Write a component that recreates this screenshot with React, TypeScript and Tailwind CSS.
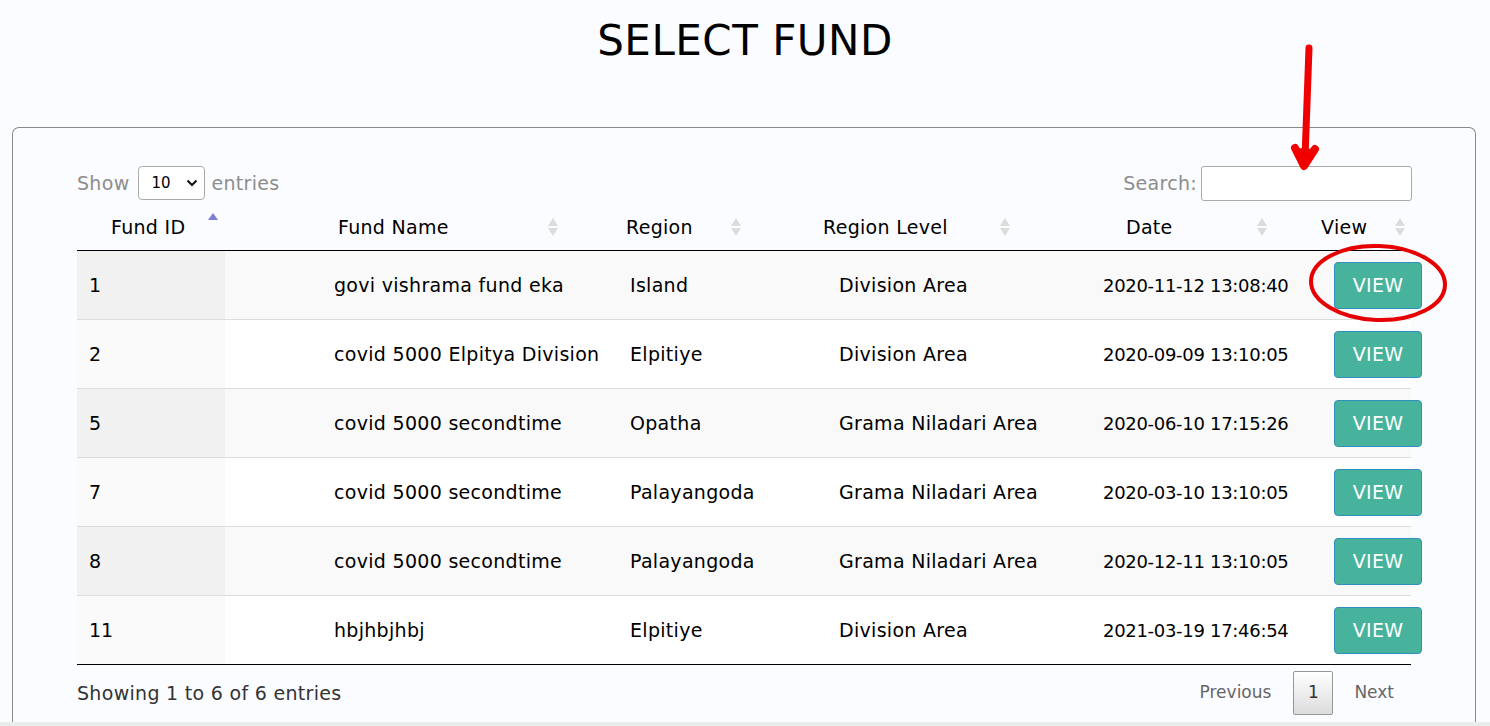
import React from "react";

const rows = [
  { id: "1", name: "govi vishrama fund eka", region: "Island", level: "Division Area", date: "2020-11-12 13:08:40" },
  { id: "2", name: "covid 5000 Elpitya Division", region: "Elpitiye", level: "Division Area", date: "2020-09-09 13:10:05" },
  { id: "5", name: "covid 5000 secondtime", region: "Opatha", level: "Grama Niladari Area", date: "2020-06-10 17:15:26" },
  { id: "7", name: "covid 5000 secondtime", region: "Palayangoda", level: "Grama Niladari Area", date: "2020-03-10 13:10:05" },
  { id: "8", name: "covid 5000 secondtime", region: "Palayangoda", level: "Grama Niladari Area", date: "2020-12-11 13:10:05" },
  { id: "11", name: "hbjhbjhbj", region: "Elpitiye", level: "Division Area", date: "2021-03-19 17:46:54" },
];

const headers = [
  { label: "Fund ID", pad: "pl-[34px]", active: true },
  { label: "Fund Name", pad: "pl-[113px]" },
  { label: "Region", pad: "pl-[61px]" },
  { label: "Region Level", pad: "pl-[75px]" },
  { label: "Date", pad: "pl-[109px]" },
  { label: "View", pad: "pl-[47px]" },
];

function SortIcon({ active }: { active?: boolean }) {
  if (active) {
    return (
      <svg width="12" height="20" viewBox="0 0 12 20" className="shrink-0">
        <path d="M6 1 L11 8 L1 8 Z" fill="#7b7fd8" />
      </svg>
    );
  }
  return (
    <svg width="12" height="20" viewBox="0 0 12 20" className="shrink-0">
      <path d="M6 1 L11 9 L1 9 Z" fill="#dcdcdc" />
      <path d="M6 19 L11 11 L1 11 Z" fill="#dcdcdc" />
    </svg>
  );
}

export default function App() {
  const font = { fontFamily: '"DejaVu Sans", sans-serif' };
  return (
    <div className="relative w-[1490px] h-[726px] overflow-hidden bg-[#fbfcff] text-black" style={font}>
      <h1 className="pt-[16px] text-center text-[42px] leading-[50px] font-normal tracking-[0.5px]">SELECT FUND</h1>

      <div className="mt-[61px] ml-[12px] w-[1464px] h-[600px] rounded-t-[7px] border-[1.5px] border-b-0 border-[#8a8a8a] px-[64px] pt-[38px]">
        {/* controls */}
        <div className="flex items-center justify-between h-[34px] tracking-[0.3px]">
          <div className="flex items-center text-[#8d8d8d] text-[19px]">
            <span>Show</span>
            <div className="ml-[9px] mr-[6px] flex items-center justify-between w-[67px] h-[34px] rounded-[4px] border border-[#aaa] bg-white pl-[12px] pr-[6px] text-black text-[15px] tracking-normal">
              <span>10</span>
              <svg width="12" height="8" viewBox="0 0 12 8">
                <path d="M1.5 1.5 L6 6 L10.5 1.5" stroke="#111" strokeWidth="2" fill="none" />
              </svg>
            </div>
            <span>entries</span>
          </div>
          <div className="flex items-center text-[#8d8d8d] text-[19px] mr-[-1px]">
            <span>Search:</span>
            <div className="ml-[4px] w-[211px] h-[35px] rounded-[3px] border border-[#aaa] bg-white" />
          </div>
        </div>

        {/* header */}
        <div className="mt-[8px] grid grid-cols-[148px_340px_183px_269px_257px_138px] h-[43px] border-b border-black text-[19px] tracking-[0.3px]">
          {headers.map((h) => (
            <div key={h.label} className={`flex items-center justify-between pr-[6px] pb-[4px] ${h.pad}`}>
              <span className="whitespace-nowrap">{h.label}</span>
              <span className={h.active ? "mt-[-10px]" : ""}>
                <SortIcon active={h.active} />
              </span>
            </div>
          ))}
        </div>

        {/* body */}
        <div className="text-[19px]">
          {rows.map((r, i) => {
            const odd = i % 2 === 0;
            return (
              <div
                key={i}
                className={`grid grid-cols-[148px_393px_209px_264px_231px_90px] h-[69px] items-center ${i < rows.length - 1 ? "border-b border-[#dddddd]" : "border-b border-black"} ${odd ? "bg-[#f9f9f9]" : "bg-white"}`}
              >
                <div className={`h-full flex items-center pl-[12px] ${odd ? "bg-[#f1f1f1]" : "bg-[#fafafa]"}`}>{r.id}</div>
                <div className="pl-[109px] whitespace-nowrap tracking-[0.3px]">{r.name}</div>
                <div className="pl-[12px] whitespace-nowrap tracking-[0.3px]">{r.region}</div>
                <div className="pl-[12px] whitespace-nowrap tracking-[0.3px]">{r.level}</div>
                <div className="pl-[12px] whitespace-nowrap text-[18px] tracking-[-0.3px]">{r.date}</div>
                <div className="pl-[12px]">
                  <button className="w-[88px] h-[47px] rounded-[4px] border border-[#2f8fbf] bg-[#47b39c] text-white text-[19px] tracking-[0.3px]">
                    VIEW
                  </button>
                </div>
              </div>
            );
          })}
        </div>

        {/* footer */}
        <div className="flex items-center justify-between h-[56px]">
          <span className="text-[#333] text-[19px] tracking-[0.3px]">Showing 1 to 6 of 6 entries</span>
          <div className="flex items-center text-[#666] text-[17px] mr-[17px]">
            <span className="mr-[22px]">Previous</span>
            <span className="w-[40px] h-[44px] flex items-center justify-center rounded-[2px] border border-[#979797] bg-gradient-to-b from-white to-[#dcdcdc] text-[#333]">1</span>
            <span className="ml-[21px]">Next</span>
          </div>
        </div>
      </div>

      <div className="absolute left-0 right-0 bottom-0 h-[4px] bg-[#e8eeec]" />

      {/* red annotations */}
      <svg className="absolute inset-0 pointer-events-none" width="1490" height="726">
        <path d="M1309 48 L1305 158" stroke="#f10000" strokeWidth="7" strokeLinecap="round" fill="none" />
        <path d="M1295 148 L1304 166 L1315 149" stroke="#f10000" strokeWidth="8" strokeLinecap="round" strokeLinejoin="round" fill="#f10000" />
        <ellipse cx="1378" cy="283" rx="67" ry="37" stroke="#e60000" strokeWidth="4" fill="none" transform="rotate(2 1378 283)" />
      </svg>
    </div>
  );
}
